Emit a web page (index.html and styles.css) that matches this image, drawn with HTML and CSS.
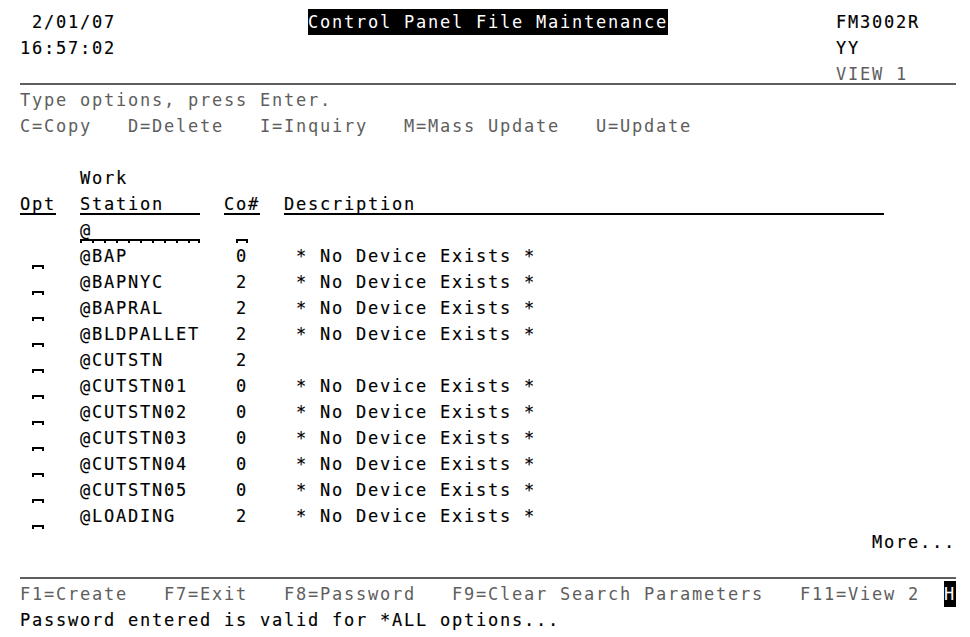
FILE: index.html
```html
<!DOCTYPE html>
<html>
<head>
<meta charset="utf-8">
<title>Control Panel File Maintenance</title>
<link rel="stylesheet" href="styles.css">
</head>
<body>
<div class="screen">
<div class="row">  2/01/07                <span class="inv">Control Panel File Maintenance</span>              FM3002R</div>
<div class="row"> 16:57:02                                                            YY</div>
<div class="row dim"> <span class="u">                                                                    VIEW 1    </span></div>
<div class="row dim"> Type options, press Enter.</div>
<div class="row dim"> C=Copy   D=Delete   I=Inquiry   M=Mass Update   U=Update</div>
<div class="row"> </div>
<div class="row">      Work</div>
<div class="row"> <span class="u">Opt</span>  <span class="u">Station   </span>  <span class="u">Co#</span>  <span class="u">Description                                       </span></div>
<div class="row">      <span class="fld">@         </span>   <span class="fld"> </span></div>
<div class="row">  <span class="fld"> </span>   @BAP         0    * No Device Exists *</div>
<div class="row">  <span class="fld"> </span>   @BAPNYC      2    * No Device Exists *</div>
<div class="row">  <span class="fld"> </span>   @BAPRAL      2    * No Device Exists *</div>
<div class="row">  <span class="fld"> </span>   @BLDPALLET   2    * No Device Exists *</div>
<div class="row">  <span class="fld"> </span>   @CUTSTN      2</div>
<div class="row">  <span class="fld"> </span>   @CUTSTN01    0    * No Device Exists *</div>
<div class="row">  <span class="fld"> </span>   @CUTSTN02    0    * No Device Exists *</div>
<div class="row">  <span class="fld"> </span>   @CUTSTN03    0    * No Device Exists *</div>
<div class="row">  <span class="fld"> </span>   @CUTSTN04    0    * No Device Exists *</div>
<div class="row">  <span class="fld"> </span>   @CUTSTN05    0    * No Device Exists *</div>
<div class="row">  <span class="fld"> </span>   @LOADING     2    * No Device Exists *</div>
<div class="row">                                                                        More...</div>
<div class="row dim"> <span class="u">                                                                              </span></div>
<div class="row"><span class="dim"> F1=Create   F7=Exit   F8=Password   F9=Clear Search Parameters   F11=View 2  </span><span class="inv">H</span></div>
<div class="row"> Password entered is valid for *ALL options...</div>
</div>
</body>
</html>
```
FILE: styles.css
```css
html, body {
  margin: 0;
  padding: 0;
  background: #ffffff;
}

.screen {
  padding: 9px 0 0 8px;
  font-family: "DejaVu Sans Mono", monospace;
  font-size: 17px;
  letter-spacing: 1.765px;
  color: #000000;
  -webkit-text-stroke: 0.15px #000000;
}

.row {
  height: 26px;
  line-height: 27px;
  white-space: pre;
}

.row span {
  display: inline-block;
  vertical-align: top;
  height: 26px;
  line-height: 27px;
}

.dim {
  color: #5e5e5e;
  -webkit-text-stroke: 0;
}

.inv {
  background: #000000;
  color: #ffffff;
  -webkit-text-stroke: 0;
}

.u {
  background: linear-gradient(currentColor, currentColor) 0 22px / 100% 2px no-repeat;
}

.fld {
  background:
    linear-gradient(currentColor, currentColor) 0 22px / 100% 2px no-repeat,
    repeating-linear-gradient(to right, currentColor 0 2px, transparent 2px 12px) 0 24px / 100% 2px no-repeat,
    linear-gradient(currentColor, currentColor) right 24px / 2px 2px no-repeat;
}
```
